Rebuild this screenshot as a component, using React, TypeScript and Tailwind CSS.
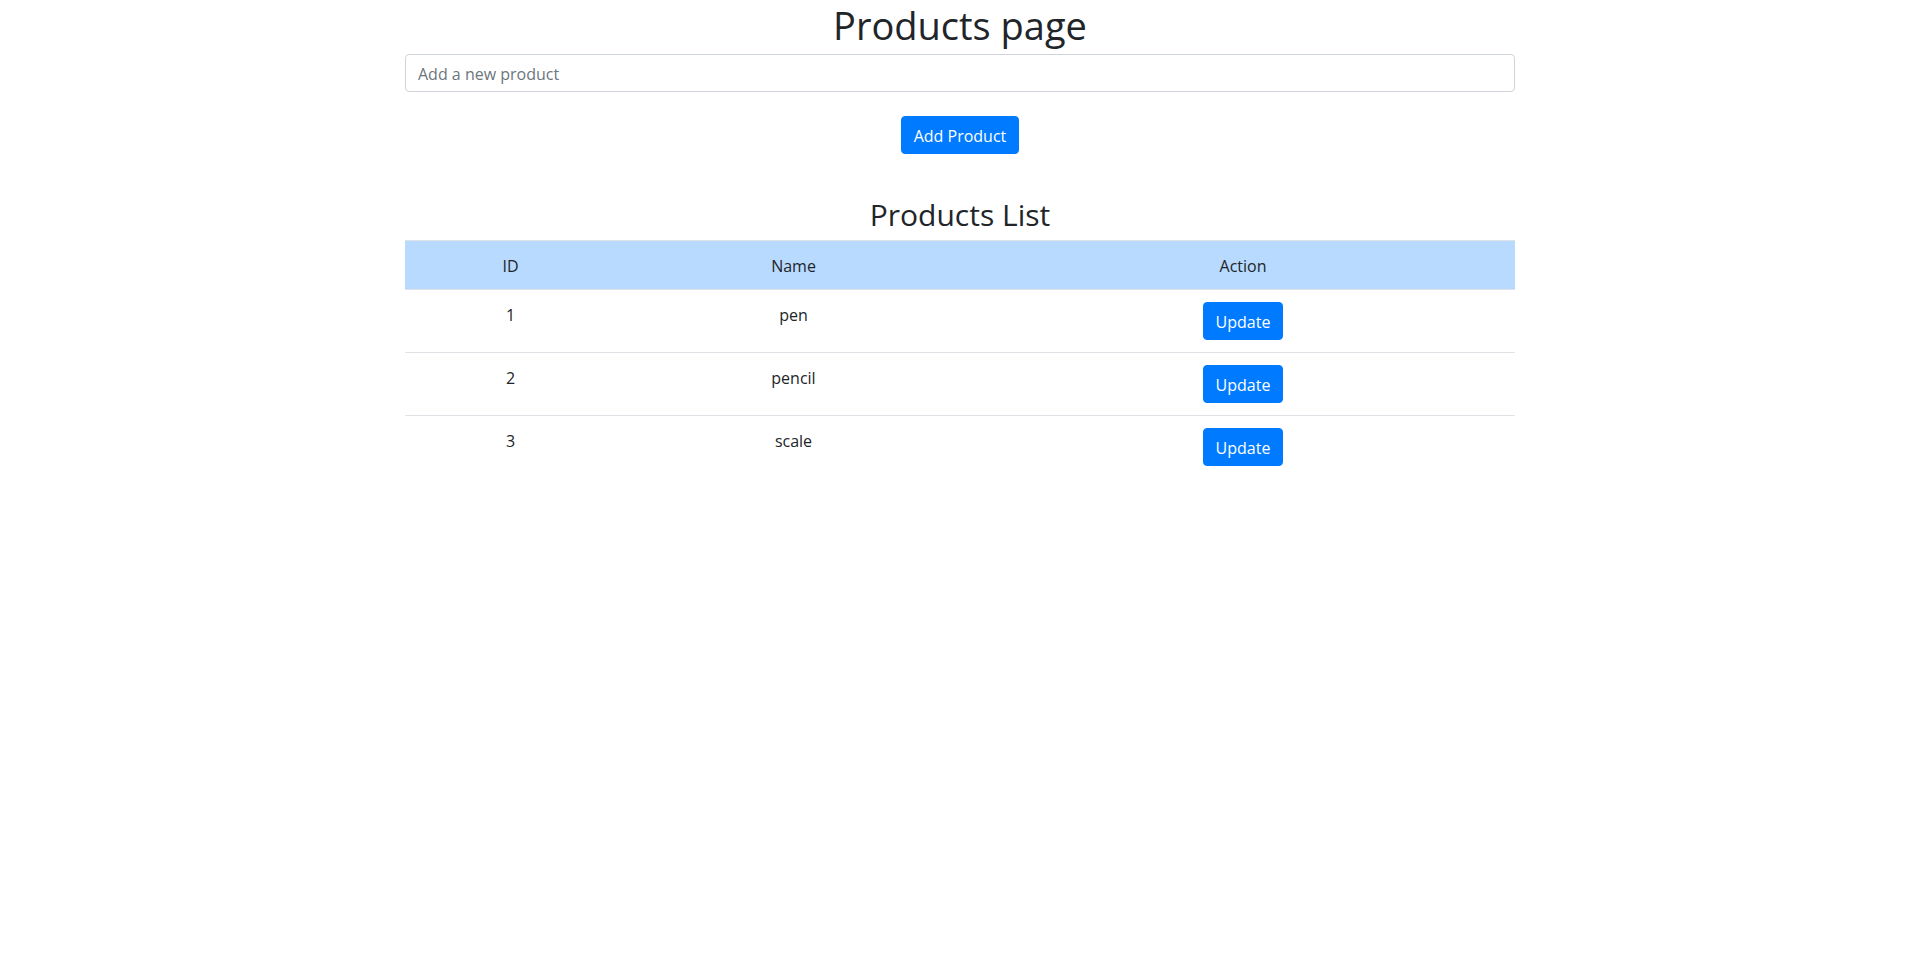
const products = [
  { id: 1, name: "pen" },
  { id: 2, name: "pencil" },
  { id: 3, name: "scale" },
];

export default function App() {
  return (
    <div className="min-h-screen bg-white text-[#212529] font-['Open_Sans',sans-serif]">
      <div className="mx-auto w-[1140px] px-[15px] text-center">
        <h1 className="text-[38px] leading-[48px] pt-px font-normal mb-[5px]">Products page</h1>
        <input
          placeholder="Add a new product"
          className="block w-full h-[38px] px-3 pt-px text-base text-left border border-[#ced4da] rounded outline-none placeholder:text-[#6c757d]"
        />
        <button className="mt-6 h-[38px] px-3 pt-px text-base text-white bg-[#007bff] border border-[#007bff] rounded">
          Add Product
        </button>
        <h2 className="mt-[42px] mb-[6px] text-[30px] leading-[38px] font-normal">Products List</h2>

        {/* table */}
        <div className="border-t border-[#dee2e6]">
          <div className="grid grid-cols-[211px_355px_544px] bg-[#b8daff] leading-6">
            <div className="pt-[13px] pb-[11px]">ID</div>
            <div className="pt-[13px] pb-[11px]">Name</div>
            <div className="pt-[13px] pb-[11px]">Action</div>
          </div>
          {products.map((p) => (
            <div key={p.id} className="grid grid-cols-[211px_355px_544px] border-t border-[#dee2e6] leading-6">
              <div className="pt-[13px] pb-[11px]">{p.id}</div>
              <div className="pt-[13px] pb-[11px]">{p.name}</div>
              <div className="py-3">
                <button className="h-[38px] px-3 pt-px text-base text-white bg-[#007bff] border border-[#007bff] rounded">
                  Update
                </button>
              </div>
            </div>
          ))}
        </div>
      </div>
    </div>
  );
}
